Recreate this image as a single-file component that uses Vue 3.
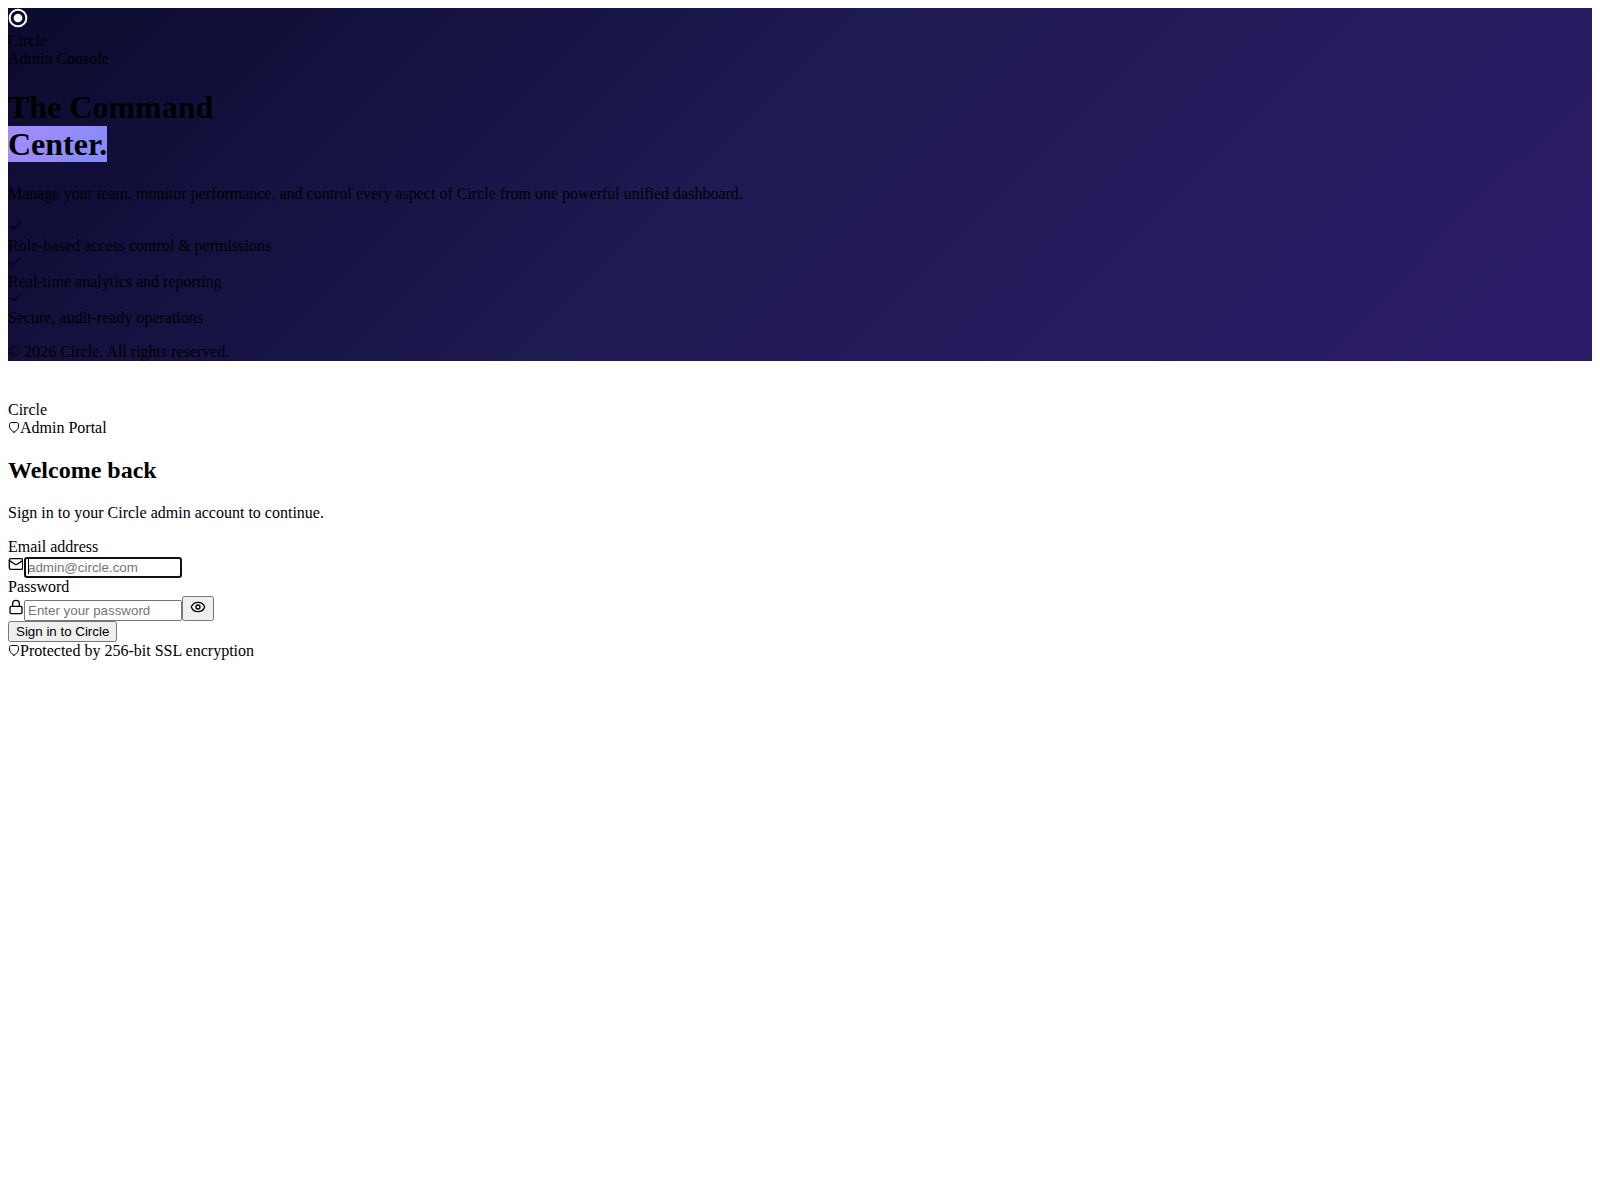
<script setup>
import { ref, onMounted } from 'vue'
const emailInput = ref(null)
const features = [
  'Role-based access control & permissions',
  'Real-time analytics and reporting',
  'Secure, audit-ready operations'
]
onMounted(() => emailInput.value && emailInput.value.focus())
</script>

<template>
  <div class="page">
    <section class="hero">
      <div class="logo">
        <svg class="logo-icon" width="20" height="20" viewBox="0 0 24 24" fill="none" stroke="#fff" stroke-width="2.4">
          <circle cx="12" cy="12" r="10" />
          <circle cx="12" cy="12" r="4" fill="#fff" />
        </svg>
      </div>
      <div>Circle</div>
      <div>Admin Console</div>
      <h1>The Command<br /><span class="accent">Center.</span></h1>
      <p>Manage your team, monitor performance, and control every aspect of Circle from one powerful unified dashboard.</p>
      <div v-for="item in features" :key="item">
        <div class="check-row">
          <svg width="14" height="14" viewBox="0 0 24 24" fill="none" stroke="currentColor" stroke-width="2" stroke-linecap="round" stroke-linejoin="round">
            <path d="M20 6 9 17l-5-5" />
          </svg>
        </div>
        <div>{{ item }}</div>
      </div>
      <p>© 2026 Circle. All rights reserved.</p>
    </section>

    <section class="form-side">
      <div class="logo">
        <svg class="logo-icon" width="20" height="20" viewBox="0 0 24 24" fill="none" stroke="#fff" stroke-width="2.4">
          <circle cx="12" cy="12" r="10" />
          <circle cx="12" cy="12" r="4" fill="#fff" />
        </svg>
      </div>
      <div>Circle</div>
      <div>
        <svg class="shield" width="12" height="12" viewBox="0 0 24 24" fill="none" stroke="currentColor" stroke-width="2" stroke-linecap="round" stroke-linejoin="round">
          <path d="M12 22.5C6 19 3 15 3 10V7c0-2.5 2-4 4.5-4h9C19 3 21 4.5 21 7v3c0 5-3 9-9 12.5z" />
        </svg><span>Admin Portal</span>
      </div>
      <h2>Welcome back</h2>
      <p>Sign in to your Circle admin account to continue.</p>
      <form @submit.prevent>
        <div>
          <label for="email">Email address</label>
          <div>
            <svg width="16" height="16" viewBox="0 0 24 24" fill="none" stroke="currentColor" stroke-width="2" stroke-linecap="round" stroke-linejoin="round">
              <path d="m22 7-8.991 5.727a2 2 0 0 1-2.009 0L2 7" />
              <rect x="2" y="4" width="20" height="16" rx="2" />
            </svg><span class="input-wrap"><input id="email" ref="emailInput" class="field" type="email" placeholder="admin@circle.com" /><span class="caret"></span></span>
          </div>
        </div>
        <div>
          <label for="password">Password</label>
          <div>
            <svg width="16" height="16" viewBox="0 0 24 24" fill="none" stroke="currentColor" stroke-width="2" stroke-linecap="round" stroke-linejoin="round">
              <rect x="3" y="11" width="18" height="11" rx="2" ry="2" />
              <path d="M7 11V7a5 5 0 0 1 10 0v4" />
            </svg><input id="password" class="field" type="password" placeholder="Enter your password" /><button class="btn" type="button">
              <svg width="16" height="16" viewBox="0 0 24 24" fill="none" stroke="currentColor" stroke-width="2" stroke-linecap="round" stroke-linejoin="round">
                <path d="M2.062 12.348a1 1 0 0 1 0-.696 10.75 10.75 0 0 1 19.876 0 1 1 0 0 1 0 .696 10.75 10.75 0 0 1-19.876 0" />
                <circle cx="12" cy="12" r="3" />
              </svg>
            </button>
          </div>
        </div>
        <button class="btn" type="submit">Sign in to Circle</button>
      </form>
      <div>
        <svg class="shield" width="12" height="12" viewBox="0 0 24 24" fill="none" stroke="currentColor" stroke-width="2" stroke-linecap="round" stroke-linejoin="round">
          <path d="M12 22.5C6 19 3 15 3 10V7c0-2.5 2-4 4.5-4h9C19 3 21 4.5 21 7v3c0 5-3 9-9 12.5z" />
        </svg><span>Protected by 256-bit SSL encryption</span>
      </div>
    </section>
  </div>
</template>

<style scoped>
.page {
  font-family: "Liberation Serif", serif;
  font-size: 16px;
  color: #000;
}
.hero {
  background: linear-gradient(135deg, #0b0a2e 0%, #1e1a52 45%, #2d1b69 100%);
}
.accent {
  background: linear-gradient(135deg, #a78bfa, #818cf8);
}
.field,
.btn {
  font-family: "Liberation Sans", sans-serif;
  font-size: 13.333px;
}
.field {
  box-sizing: border-box;
  width: 158px;
}
.input-wrap {
  position: relative;
  display: inline-block;
}
.caret {
  position: absolute;
  left: 4px;
  top: 2px;
  width: 1px;
  height: 15px;
  background: #000;
}
.check-row {
  height: 18px;
}
</style>

<style>
body {
  margin: 8px;
}
</style>
